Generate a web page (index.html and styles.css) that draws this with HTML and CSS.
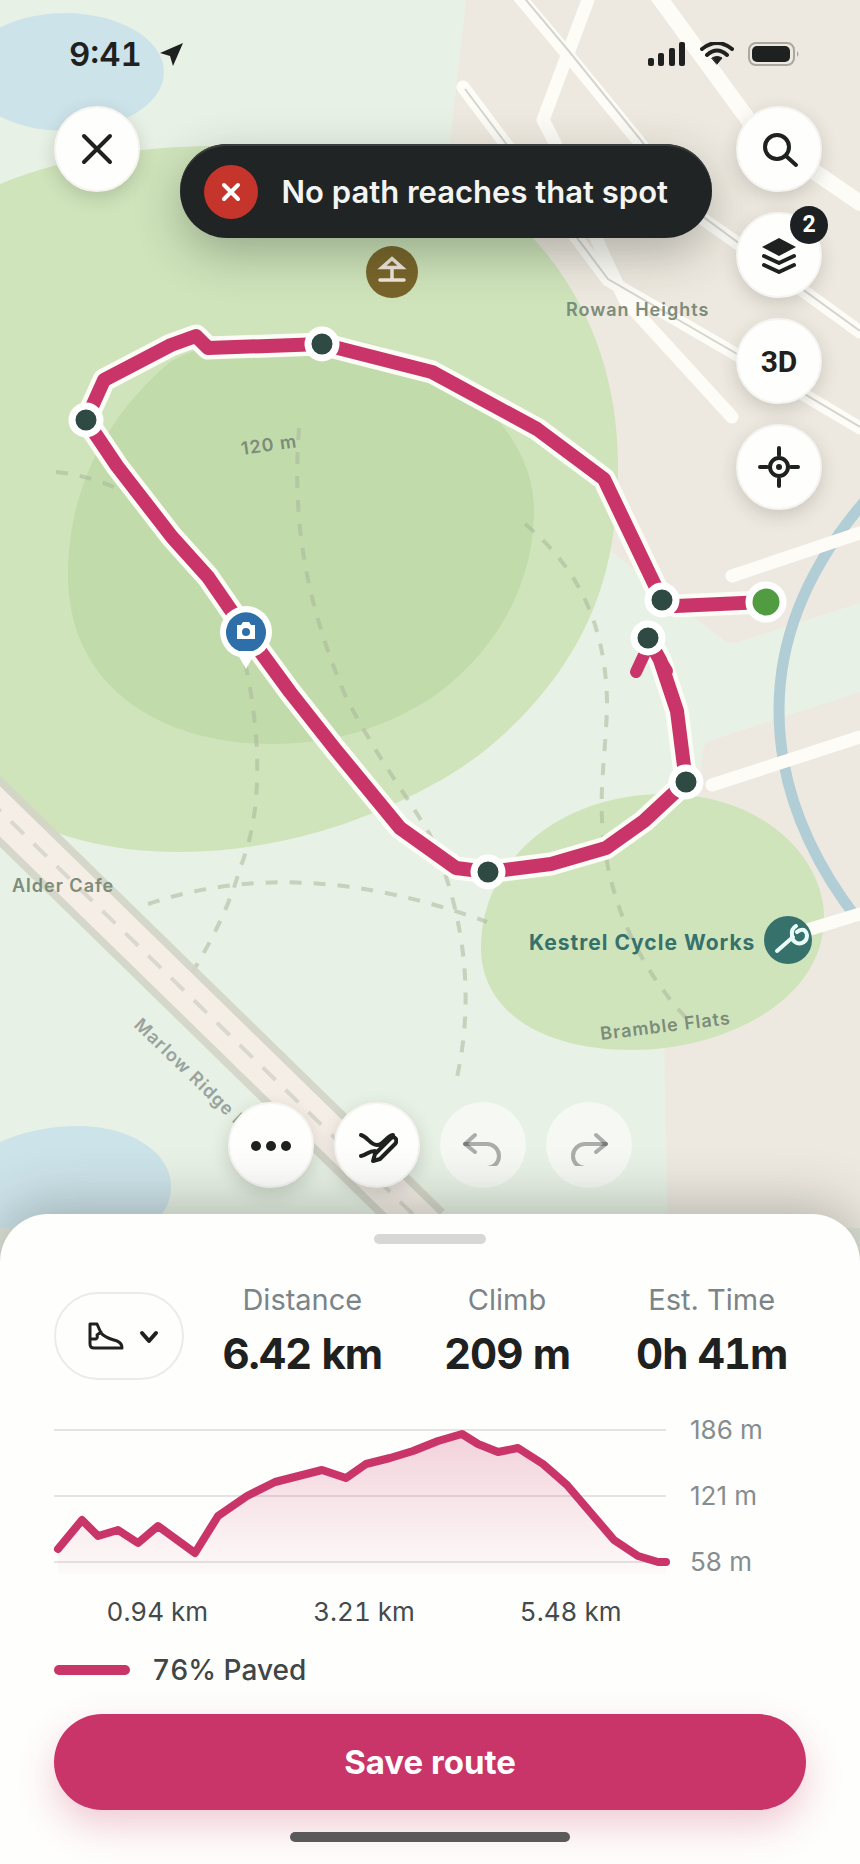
FILE: index.html
```html
<!DOCTYPE html>
<html lang="en">
<head>
<meta charset="utf-8">
<meta name="viewport" content="width=device-width, initial-scale=1">
<title>Route planner</title>
<link rel="stylesheet" href="styles.css">
</head>
<body>
<div class="app">
  <main class="stage">
    <svg class="map" viewBox="0 0 860 1228" role="img" aria-label="Route map">
      <rect class="land" width="860" height="1228"/>
      <path class="urban" d="M466 0H860V603L738 642Q728 645 720 637L700 622L612 552L430 400L450 143Z"/>
      <path class="urban" d="M860 692L712 740Q704 743 703 750L698 790L664 1040L668 1228H860Z"/>
      <ellipse class="water" cx="65" cy="72" rx="99" ry="59"/>
      <path class="water" d="M171 1187C171 1152 130 1126 78 1126C50 1126 22 1132 0 1142V1228H150C165 1214 171 1200 171 1187Z"/>
      <path class="park" d="M0 184C70 155 150 146 220 146C380 146 470 180 533 238C590 300 618 380 618 465C618 560 595 625 550 684C510 735 470 765 430 786C350 830 260 852 180 852C110 852 50 837 0 805Z"/>
      <path class="hill" d="M68 575C68 510 90 430 170 362C205 341 270 334 322 336C430 342 534 420 534 510C534 580 500 650 430 699C380 730 330 744 270 744C165 744 68 690 68 575Z"/>
      <path class="park" d="M481 948C481 860 560 794 665 794C760 794 824 855 824 918C824 1000 725 1050 632 1050C540 1050 481 1010 481 948Z"/>
      <path class="river" d="M864 502C806 570 779 640 779 710C779 780 804 850 858 920"/>

      <g class="road">
        <path d="M588 0L543 120L555 143L604 256L625 300L732 417"/>
        <path d="M517 -6L568 55L640 143L690 210L740 245L860 332"/>
        <path d="M463 87L608 280L732 352L860 428"/>
        <path class="wide" d="M655 -8L758 133L860 203"/>
        <path d="M732 576L860 533"/>
        <path d="M712 785L860 737"/>
        <path d="M771 941L860 914"/>
      </g>
      <g class="road-line">
        <path d="M521 -6L568 50L640 139L690 207L740 244L860 331"/>
        <path d="M465 89L608 279L732 351L860 427"/>
      </g>

      <g class="trail">
        <path d="M148 904Q300 853 487 922"/>
        <path d="M299 428C292 520 305 600 345 695C375 755 410 800 430 835C470 925 472 1010 457 1077"/>
        <path d="M240 640C262 730 264 810 240 868C230 905 212 940 192 973"/>
        <path d="M56 472Q95 476 130 495"/>
        <path d="M525 524C575 565 605 620 607 700C607 740 600 780 602 820C606 900 640 970 690 1022"/>
      </g>

      <path class="highway-edge" d="M-30 782L427 1228"/>
      <path class="highway" d="M-30 782L427 1228"/>
      <path class="highway-dash" d="M-12 799L427 1228"/>

      <g class="map-label">
        <text x="566" y="316">Rowan Heights</text>
        <text x="12" y="892">Alder Cafe</text>
        <text x="242" y="455" transform="rotate(-8 242 455)">120 m</text>
        <text x="601" y="1040" transform="rotate(-7 601 1040)">Bramble Flats</text>
        <text class="faint" x="133" y="1026" transform="rotate(44 133 1026)">Marlow Ridge Road</text>
      </g>

      <circle class="poi-shelter" cx="392" cy="272" r="26"/>
      <path class="glyph-shelter" d="M392 258.5L402 267.5H382ZM392 268V280M380 280H404"/>

      <path class="route-case" d="M766 602L676 606L662 600L604 479L537 429L432 372L322 344L208 348L196 336L171 345L104 380L86 420L117 466L172 537L208 577L246 632L290 692L335 749L400 828L456 868L488 872L551 864L606 848L644 821L686 782L677 711L660 660L648 638"/>
      <path class="route" d="M766 602L676 606L662 600L604 479L537 429L432 372L322 344L208 348L196 336L171 345L104 380L86 420L117 466L172 537L208 577L246 632L290 692L335 749L400 828L456 868L488 872L551 864L606 848L644 821L686 782L677 711L660 660L648 638"/>
      <path class="route-end" d="M636 672L650 642L667 671"/>

      <g class="stop">
        <circle cx="322" cy="344" r="14"/>
        <circle cx="86" cy="420" r="14"/>
        <circle cx="662" cy="600" r="14"/>
        <circle cx="648" cy="638" r="14"/>
        <circle cx="686" cy="782" r="14"/>
        <circle cx="488" cy="872" r="14"/>
      </g>
      <circle class="start" cx="766" cy="602" r="17"/>

      <path class="pin" d="M238 655H254L246 669Z"/>
      <circle class="pin" cx="246" cy="632" r="26"/>
      <path class="pin-fill" d="M239 651A20 20 0 1 1 253 651Z"/>
      <path class="pin" d="M237 625H241L243 622H249L251 625H255V639H237Z"/>
      <circle class="pin-fill" cx="246" cy="632" r="4"/>

      <text class="shop-label" x="529" y="950">Kestrel Cycle Works</text>
      <circle class="shop" cx="788" cy="940" r="24"/>
      <path class="glyph-shop" d="M777 951L793 937M796 926Q791 929 792 935A7.5 7.5 0 1 0 804 930Q800 929 797 932"/>
    </svg>

    <header class="status">
      <span class="clock">9:41
        <svg width="24" height="24" viewBox="0 0 24 24" aria-hidden="true"><path d="M0 11L23 1L13 24L10 14Z"/></svg>
      </span>
      <span class="signals">
        <svg width="38" height="24" viewBox="0 0 38 24" aria-hidden="true"><rect y="16" width="6" height="8" rx="2"/><rect x="10" y="11" width="6" height="13" rx="2"/><rect x="21" y="6" width="6" height="18" rx="2"/><rect x="31" width="6" height="24" rx="2"/></svg>
        <svg class="wifi" width="34" height="24" viewBox="0 0 34 24" aria-hidden="true"><path d="M2 7Q17 -5 32 7M7 13Q17 4 27 13"/><path class="solid" d="M12 16Q17 13 22 16L17 22Z"/></svg>
        <svg width="52" height="24" viewBox="0 0 52 24" aria-hidden="true"><rect class="shell" x="1" y="1" width="45" height="22" rx="7"/><rect x="4" y="4" width="38" height="16" rx="5"/><path class="nub" d="M49 9Q52 12 49 15Z"/></svg>
      </span>
    </header>

    <div class="overlay">
      <button class="round" type="button" aria-label="Close"><svg viewBox="0 0 42 42"><path d="M8 8L34 34M34 8L8 34"/></svg></button>
      <div class="toast" role="alert">
        <span class="toast-mark"><svg viewBox="0 0 24 24" aria-hidden="true"><path d="M5 5L19 19M19 5L5 19"/></svg></span>
        <span>No path reaches that spot</span>
      </div>
      <div class="tools">
        <button class="round" type="button" aria-label="Search"><svg viewBox="0 0 42 42"><circle cx="19" cy="19" r="12"/><path d="M28 28L38 37"/></svg></button>
        <button class="round" type="button" aria-label="Map layers"><svg viewBox="0 0 42 42"><path class="solid" d="M21 4L38 13L21 22L4 13Z"/><path d="M6 22L21 29L36 22M6 31L21 38L36 31"/></svg><span class="badge">2</span></button>
        <button class="round text" type="button">3D</button>
        <button class="round" type="button" aria-label="My location"><svg viewBox="0 0 42 42"><circle cx="21" cy="21" r="9"/><circle class="solid" cx="21" cy="21" r="3"/><path d="M21 2V9M21 33V40M2 21H9M33 21H40"/></svg></button>
      </div>
    </div>

    <nav class="actions" aria-label="Route editing">
      <button class="round" type="button" aria-label="More"><svg viewBox="0 0 42 42"><g class="solid"><circle cx="6" cy="22" r="5"/><circle cx="21" cy="22" r="5"/><circle cx="36" cy="22" r="5"/></g></svg></button>
      <button class="round" type="button" aria-label="Draw route"><svg viewBox="0 0 42 42"><path d="M5 11C12 13 14 21 21 21C28 21 30 12 37 11M5 32C11 31 12 27 19 27M17 37L19 30L35 14Q38 12 40 15Q41 18 39 20L24 35Z"/></svg></button>
      <button class="round" type="button" aria-label="Undo" disabled><svg viewBox="0 0 42 42"><path d="M13 11L3 20L13 28"/><path d="M3 20H25A12 12 0 0 1 25 44H14"/></svg></button>
      <button class="round" type="button" aria-label="Redo" disabled><svg viewBox="0 0 42 42"><path d="M28 11L38 20L28 28"/><path d="M38 20H17A12 12 0 0 0 17 44H28"/></svg></button>
    </nav>
  </main>

  <section class="sheet" aria-label="Route summary">
    <div class="handle"></div>
    <div class="summary">
      <button class="mode" type="button" aria-label="Activity: walking" aria-haspopup="listbox">
        <svg width="40" height="40" viewBox="0 0 40 40"><path d="M4 8H11L15 17C19 22 25 23 31 25Q36 27 36 32H8Q4 32 4 28ZM4 23H10Q12 22 11 19L15 16"/></svg>
        <svg class="chevron" width="20" height="20" viewBox="0 0 20 20"><path d="M3 7L10 15L17 7"/></svg>
      </button>
      <dl class="stats">
        <div><dt>Distance</dt><dd>6.42 km</dd></div>
        <div><dt>Climb</dt><dd>209 m</dd></div>
        <div><dt>Est. Time</dt><dd>0h 41m</dd></div>
      </dl>
    </div>
    <div class="chart">
      <svg class="plot" viewBox="0 0 620 160" role="img" aria-label="Elevation profile">
        <defs><linearGradient id="rise" x1="0" y1="0" x2="0" y2="1"><stop class="rise-top" offset="0"/><stop class="rise-end" offset="1"/></linearGradient></defs>
        <path class="grid-line" d="M0 14H612M0 80H612M0 146H612"/>
        <path fill="url(#rise)" d="M4 133L28 104L44 120L64 114L84 127L104 110L141 137L164 100L193 80L221 66L268 54L292 62L312 48L336 42L359 35L384 25L408 18L424 28L444 36L464 32L489 48L513 69L560 124L584 140L604 146H612V158H4Z"/>
        <path class="profile" d="M4 133L28 104L44 120L64 114L84 127L104 110L141 137L164 100L193 80L221 66L268 54L292 62L312 48L336 42L359 35L384 25L408 18L424 28L444 36L464 32L489 48L513 69L560 124L584 140L604 146H612"/>
      </svg>
      <div class="heights"><span>186 m</span><span>121 m</span><span>58 m</span></div>
      <div class="distances"><span>0.94 km</span><span>3.21 km</span><span>5.48 km</span></div>
    </div>
    <p class="legend"><span class="swatch"></span>76% Paved</p>
    <button class="save" type="button">Save route</button>
    <div class="home"></div>
  </section>
</div>
</body>
</html>
```
FILE: styles.css
```css
* { box-sizing: border-box; }
body {
  margin: 0;
  background: #dfe4da;
  color: #1f2121;
  font-family: Inter, "Liberation Sans", sans-serif;
}
button { font: inherit; color: inherit; cursor: pointer; }
.app { display: flex; flex-direction: column; min-height: 100vh; overflow: hidden; }

/* Map */
.stage { position: relative; flex: 1; display: flex; flex-direction: column; padding-bottom: 26px; }
.map { position: absolute; top: 0; left: 0; width: 100%; height: auto; }
.land { fill: #e8f1e5; }
.urban { fill: #eee9e0; }
.water { fill: #cde3ea; }
.park { fill: #cfe4bb; }
.hill { fill: #c1dbab; }
.river { fill: none; stroke: #b1cdd5; stroke-width: 11; }
.road { fill: none; stroke: #fdfcf7; stroke-width: 13; stroke-linecap: round; stroke-linejoin: round; }
.road .wide { stroke-width: 16; }
.road-line { fill: none; stroke: #d6d4cf; stroke-width: 2; }
.trail { fill: none; stroke: #abb79a; stroke-opacity: .55; stroke-width: 4; stroke-dasharray: 12 12; }
.highway-edge { stroke: #d3d4c6; stroke-width: 51; stroke-opacity: .9; }
.highway { stroke: #f5eee7; stroke-width: 36; }
.highway-dash { stroke: #d9d8cd; stroke-width: 4; stroke-dasharray: 18 14; }
.map-label { fill: #7c8c7b; font-size: 18px; font-weight: 600; letter-spacing: 1px; }
.map-label .faint { fill: #98a3a0; }
.shop-label { fill: #37716c; font-size: 21px; font-weight: 700; letter-spacing: 1px; }
.poi-shelter { fill: #79652a; }
.glyph-shelter { fill: none; stroke: #f0e8dc; stroke-width: 3.5; stroke-linecap: round; }
.shop { fill: #37716c; }
.glyph-shop { fill: none; stroke: #e9fbf7; stroke-width: 4; stroke-linecap: round; }
.route-case, .route, .route-end { fill: none; stroke-linejoin: round; stroke-linecap: round; }
.route-case { stroke: #fbfcf6; stroke-width: 23; }
.route { stroke: #c93469; stroke-width: 14; }
.route-end { stroke: #c93469; stroke-width: 12; }
.stop { fill: #2f4a42; stroke: #fff; stroke-width: 7; }
.start { fill: #519c40; stroke: #fff; stroke-width: 7; }
.pin { fill: #fff; }
.pin-fill { fill: #2f6fa9; }

/* Status bar */
.status { position: relative; display: flex; justify-content: space-between; align-items: center; padding: 34px 60px 0 69px; fill: #1f2121; }
.clock { display: flex; align-items: center; gap: 18px; font-size: 33px; line-height: 40px; font-weight: 600; font-variant-numeric: tabular-nums; }
.signals { display: flex; align-items: center; gap: 14px; }
.wifi { fill: none; stroke: #1f2121; stroke-width: 4; stroke-linecap: round; }
.wifi .solid { fill: #1f2121; stroke-width: 1; }
.shell { fill: none; stroke: #a9a89f; stroke-width: 2; }
.nub { fill: #a9a89f; }

/* Floating controls */
.overlay { position: relative; display: grid; grid-template-columns: 86px 1fr 86px; column-gap: 24px; align-items: start; padding: 32px 38px 0 54px; }
.tools { display: grid; gap: 20px; }
.actions { position: relative; display: flex; justify-content: center; gap: 20px; margin-top: auto; }
.round {
  position: relative;
  display: grid;
  place-items: center;
  width: 86px;
  height: 86px;
  padding: 0;
  border: 2px solid #f5f4f1;
  border-radius: 50%;
  background: #fefefc;
  box-shadow: 0 6px 18px rgba(40, 45, 40, .18);
}
.round svg { width: 42px; height: 42px; fill: none; stroke: #1f2121; stroke-width: 4; stroke-linecap: round; stroke-linejoin: round; }
.round .solid { fill: #1f2121; stroke: none; }
.round.text { font-family: Roboto, "Liberation Sans", sans-serif; font-size: 30px; font-weight: 700; }
.round:disabled { border-color: transparent; background: rgba(254, 254, 252, .6); background-clip: border-box; box-shadow: none; cursor: default; }
.round:disabled svg { stroke: rgba(31, 33, 33, .35); }
.badge {
  position: absolute;
  top: -8px;
  right: -8px;
  width: 38px;
  border-radius: 50%;
  background: #1c2022;
  color: #fff;
  font-family: Roboto, "Liberation Sans", sans-serif;
  font-size: 23px;
  font-weight: 700;
  line-height: 38px;
  text-align: center;
}
.toast {
  justify-self: end;
  display: flex;
  align-items: center;
  gap: 24px;
  min-height: 94px;
  margin-top: 38px;
  padding: 2px 44px 0 24px;
  border-radius: 47px;
  background: #212424;
  color: #f4f4f2;
  font-size: 31px;
  line-height: 40px;
  font-weight: 600;
  white-space: nowrap;
  box-shadow: 0 16px 48px rgba(30, 40, 30, .3), inset 0 2px 0 #3a3d3b;
}
.toast-mark { display: grid; place-items: center; width: 54px; height: 54px; border-radius: 50%; background: #c6352c; }
.toast-mark svg { width: 24px; height: 24px; stroke: #fff; stroke-width: 4; stroke-linecap: round; }

/* Bottom sheet */
.sheet {
  position: relative;
  display: flex;
  flex-direction: column;
  padding: 20px 54px 22px;
  border-radius: 48px 48px 0 0;
  background: #fefefc;
  box-shadow: 0 -8px 56px rgba(40, 50, 40, .3);
}
.handle { align-self: center; width: 112px; height: 10px; border-radius: 5px; background: #d7d7d5; }
.summary { display: flex; align-items: flex-end; gap: 16px; margin-top: 38px; margin-right: -8px; }
.mode {
  display: flex;
  align-items: center;
  justify-content: center;
  gap: 13px;
  width: 130px;
  height: 88px;
  padding: 0 0 0 6px;
  border: 2px solid #ebebe9;
  border-radius: 44px;
  background: transparent;
}
.mode svg { fill: none; stroke: #1f2121; stroke-width: 3; stroke-linecap: round; stroke-linejoin: round; }
.mode .chevron { stroke-width: 4; }
.stats { flex: 1; display: grid; grid-template-columns: repeat(3, 1fr); margin: 0; text-align: center; }
.stats dt { color: #7b8488; font-size: 29px; line-height: 36px; }
.stats dd { margin: 10px 0 0; font-size: 42px; line-height: 52px; font-weight: 700; font-variant-numeric: tabular-nums; letter-spacing: -1px; white-space: nowrap; }
.chart { display: grid; grid-template-columns: 1fr 116px; column-gap: 16px; row-gap: 20px; margin-top: 36px; }
.plot { width: 100%; height: 160px; overflow: visible; }
.grid-line { stroke: #e3e4e3; stroke-width: 2; }
.profile { fill: none; stroke: #c93469; stroke-width: 8; stroke-linecap: round; stroke-linejoin: round; }
.rise-top { stop-color: #c93469; stop-opacity: .22; }
.rise-end { stop-color: #c93469; stop-opacity: .02; }
.heights { display: flex; flex-direction: column; justify-content: space-between; color: #868d91; font-size: 26px; line-height: 28px; }
.distances { display: grid; grid-template-columns: repeat(3, 1fr); color: #444a4b; font-size: 26px; line-height: 32px; font-variant-numeric: tabular-nums; text-align: center; }
.legend { display: flex; align-items: center; gap: 22px; margin: 24px 0 0; color: #3f4647; font-size: 28px; line-height: 36px; font-weight: 500; font-variant-numeric: tabular-nums; }
.swatch { width: 76px; height: 10px; border-radius: 5px; background: #c93469; }
.save {
  min-height: 96px;
  margin-top: 26px;
  padding: 0;
  border: 0;
  border-radius: 48px;
  background: #c93469;
  color: #fff;
  font-size: 33px;
  font-weight: 700;
  box-shadow: 0 16px 36px rgba(201, 52, 105, .25);
}
.home { position: relative; align-self: center; width: 280px; height: 10px; margin-top: 22px; border-radius: 5px; background: #5a5a5a; }
```
